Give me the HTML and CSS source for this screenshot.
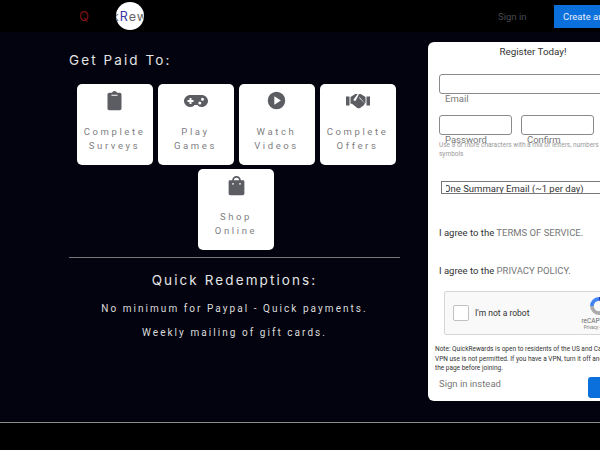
FILE: index.html
```html
<!DOCTYPE html>
<html lang="en">
<head>
    <meta charset="UTF-8">
    <meta name="viewport" content="width=device-width, initial-scale=1.0">
    <title>QuickRewards</title>
    <link rel="stylesheet" href="styles.css">
</head>
<body>
    <header class="topbar">
        <div class="logo">
            <span class="logo-q">Q</span>
            <span class="logo-circle"><span class="logo-text">k<span class="logo-r">R</span>ew</span></span>
        </div>
        <a class="signin-link">Sign in</a>
        <a class="create-btn">Create an account</a>
    </header>

    <main class="main">
        <section class="pitch">
            <h2 class="pitch-title">Get Paid To:</h2>
            <div class="tiles">
                <div class="tile">
                    <svg class="tile-icon" viewBox="0 0 24 24"><path fill-rule="evenodd" d="M12 1c1.4 0 2.4.8 2.8 2H18c1 0 2 .9 2 2v16c0 1.1-1 2-2 2H6c-1 0-2-.9-2-2V5c0-1.100 1-2 2-2h3.200C9.600 1.800 10.600 1 12 1zM8.500 5.500v1h7v-1z"/></svg>
                    <span class="tile-label">Complete<br>Surveys</span>
                </div>
                <div class="tile">
                    <svg class="tile-icon tile-icon-wide" viewBox="0 0 24 24"><path fill-rule="evenodd" d="M6.500 6h11C21 6 24 8.700 24 12s-3 6-6.500 6c-2 0-3.300-1-4-2h-3c-.7 1-2 2-4 2C3 18 0 15.300 0 12s3-6 6.500-6zM5.500 9v2h-2v2h2v2h2v-2h2v-2h-2V9zM18.500 8.800a1.500 1.500 0 100 3 1.500 1.500 0 000-3zM15.800 12.500a1.500 1.500 0 100 3 1.500 1.500 0 000-3z"/></svg>
                    <span class="tile-label">Play<br>Games</span>
                </div>
                <div class="tile">
                    <svg class="tile-icon" viewBox="0 0 24 24"><path fill-rule="evenodd" d="M12 2a10 10 0 110 20 10 10 0 010-20zM9.500 7.200v9.600l7.500-4.800z"/></svg>
                    <span class="tile-label">Watch<br>Videos</span>
                </div>
                <div class="tile">
                    <svg class="tile-icon tile-icon-wide" viewBox="0 0 24 24"><path d="M0 7.500h3.500v9H0zM20.500 7.500H24v9h-3.500zM4.500 8l4.800-3h2.400L7.600 10.500c-.4.700 1.200 2 2.200 1l2.700-3.200 6.400 6.300-1 1.400-.9.900-1 .7-1.500 1.200c-1 .7-2.200.7-3.200.1L6 14.700H4.500zM13 5h1.700l4.800 3v6l-.6.300-5.300-6-2 2.300-1.600.3z"/></svg>
                    <span class="tile-label">Complete<br>Offers</span>
                </div>
                <div class="tile">
                    <svg class="tile-icon" viewBox="0 0 24 24"><path fill-rule="evenodd" d="M12 1c2.800 0 4.800 2.100 5 5h2.500c.9 0 1.500.7 1.500 1.500V21c0 1.100-.9 2-2 2H5c-1.100 0-2-.9-2-2V7.500C3 6.700 3.600 6 4.500 6H7c.2-2.900 2.200-5 5-5zm0 2c-1.700 0-2.900 1.300-3 3h6c-.1-1.700-1.300-3-3-3zM8 9a1 1 0 100 2 1 1 0 000-2zm8 0a1 1 0 100 2 1 1 0 000-2z"/></svg>
                    <span class="tile-label">Shop<br>Online</span>
                </div>
            </div>
            <hr class="divider">
            <h3 class="redeem-title">Quick Redemptions:</h3>
            <p class="redeem-line">No minimum for Paypal - Quick payments.</p>
            <p class="redeem-line">Weekly mailing of gift cards.</p>
        </section>

        <section class="register">
            <h4 class="register-title">Register Today!</h4>
            <div class="field field-email">
                <input class="input" type="text">
                <label class="field-label">Email</label>
            </div>
            <div class="pass-row">
                <div class="field">
                    <input class="input input-small" type="password">
                    <label class="field-label">Password</label>
                </div>
                <div class="field">
                    <input class="input input-small" type="password">
                    <label class="field-label">Confirm</label>
                </div>
            </div>
            <p class="hint">Use 8 or more characters with a mix of letters, numbers &amp; symbols</p>
            <select class="mail-select">
                <option>One Summary Email (~1 per day)</option>
            </select>
            <p class="agree">I agree to the <a>TERMS OF SERVICE</a>.</p>
            <p class="agree agree-second">I agree to the <a>PRIVACY POLICY</a>.</p>
            <div class="captcha">
                <span class="captcha-box"></span>
                <span class="captcha-text">I'm not a robot</span>
                <div class="captcha-brand">
                    <svg class="captcha-logo" viewBox="0 0 24 24" fill="none" stroke-width="4.500">
                        <path stroke="#1c3aa9" d="M12 3.500a8.500 8.500 0 016.500 3"/>
                        <path stroke="#4285f4" d="M3.500 12A8.500 8.500 0 0112 3.500"/>
                        <path stroke="#ababab" d="M20.500 12a8.500 8.500 0 01-17 0"/>
                    </svg>
                    <span class="captcha-name">reCAPTCHA</span>
                    <span class="captcha-links">Privacy - Terms</span>
                </div>
            </div>
            <p class="note">Note: QuickRewards is open to residents of the US and Canada.<br>VPN use is not permitted. If you have a VPN, turn it off and refresh<br>the page before joining.</p>
            <div class="form-foot">
                <a class="signin-instead">Sign in instead</a>
                <a class="next-btn">Next</a>
            </div>
        </section>
    </main>

    <footer class="footer"></footer>
</body>
</html>
```

FILE: styles.css
```css
* {
    box-sizing: border-box;
    margin: 0;
    padding: 0;
}

html, body {
    height: 450px;
    overflow: hidden;
}

body {
    font-family: "Roboto", sans-serif;
    background: #000;
    display: flex;
    flex-direction: column;
}

.topbar {
    height: 32px;
    background: #000;
    display: flex;
    align-items: center;
    flex-shrink: 0;
    white-space: nowrap;
}

.logo {
    display: flex;
    align-items: center;
    flex-shrink: 0;
    margin-left: 79px;
    width: 419px;
}

.logo-q {
    width: 37px;
    color: #7d1216;
    font-family: "Inter", sans-serif;
    font-size: 13px;
}

.logo-circle {
    width: 28px;
    height: 28px;
    border-radius: 50%;
    background: #fff;
    overflow: hidden;
    display: flex;
    align-items: center;
    justify-content: center;
    flex-shrink: 0;
}

.logo-text {
    font-family: "Inter", sans-serif;
    font-size: 12.5px;
    letter-spacing: 1px;
    color: #666;
}

.logo-r {
    color: #3535a5;
}

.signin-link {
    color: #484b50;
    font-size: 9.5px;
    width: 56px;
    flex-shrink: 0;
}

.create-btn {
    background: #0b6fdc;
    color: #e6eefa;
    font-size: 9.5px;
    height: 23px;
    line-height: 23px;
    padding: 0 9px;
    flex-shrink: 0;
}

.main {
    height: 390px;
    background: #02030f;
    display: flex;
    align-items: flex-start;
    flex-shrink: 0;
    padding: 10px 0 0 69px;
    gap: 28px;
}

.pitch {
    width: 331px;
    flex-shrink: 0;
    padding-top: 9px;
}

.pitch-title {
    font-family: "Inter", sans-serif;
    font-weight: 400;
    font-size: 13.5px;
    letter-spacing: 2.1px;
    color: #e4e4e4;
    line-height: 18px;
}

.tiles {
    display: flex;
    flex-wrap: wrap;
    justify-content: center;
    gap: 4px 5px;
    margin-top: 15px;
    padding-left: 3px;
}

.tile {
    width: 76px;
    height: 81px;
    background: #fff;
    border-radius: 5px;
    display: flex;
    flex-direction: column;
    align-items: center;
    padding-top: 6px;
}

.tile-icon {
    width: 21px;
    height: 21px;
    fill: #5c5d63;
}

.tile-icon-wide {
    width: 24px;
    height: 24px;
    margin: -1.5px 0;
}

.tile-label {
    margin-top: 14px;
    font-size: 9.5px;
    line-height: 14px;
    letter-spacing: 2.6px;
    color: #808084;
    text-align: center;
}

.divider {
    border: none;
    border-top: 1px solid #77787c;
    margin-top: 7px;
}

.redeem-title {
    font-family: "Inter", sans-serif;
    font-weight: 400;
    font-size: 13.5px;
    letter-spacing: 2.1px;
    color: #e4e4e4;
    text-align: center;
    line-height: 18px;
    margin-top: 13px;
}

.redeem-line {
    color: #dcdcdc;
    font-size: 10px;
    letter-spacing: 2.05px;
    line-height: 14px;
    text-align: center;
    margin-top: 10px;
}

.redeem-title + .redeem-line {
    margin-top: 13px;
}

.register {
    width: 320px;
    height: 359px;
    flex-shrink: 0;
    background: #fff;
    border-radius: 6px;
    padding: 4px 0 0 11px;
}

.register-title {
    width: 188px;
    font-weight: 400;
    font-size: 9.8px;
    line-height: 12px;
    color: #333;
    text-align: center;
}

.field-email {
    margin-top: 16px;
}

.input {
    display: block;
    width: 300px;
    height: 20px;
    border: 1px solid #8a8a8a;
    border-radius: 3px;
    background: #fff;
}

.input-small {
    width: 73px;
}

.field-label {
    display: block;
    font-size: 9.5px;
    line-height: 10px;
    margin-left: 6px;
    color: #777;
}

.pass-row {
    display: flex;
    gap: 9px;
    margin-top: 11px;
}

.hint {
    width: 175px;
    font-size: 6.5px;
    line-height: 9.5px;
    color: #999;
    margin-top: -4.5px;
}

.mail-select {
    display: block;
    width: 260px;
    height: 13px;
    margin: 21px 0 0 2px;
    border: 1px solid #777;
    background: #fff;
    font-family: "Roboto", sans-serif;
    font-size: 9.5px;
    line-height: 11px;
    color: #333;
    padding: 0;
    text-indent: -2px;
}

.agree {
    font-size: 9.5px;
    line-height: 12px;
    color: #333;
    margin-top: 33.5px;
}

.agree-second {
    margin-top: 26px;
}

.agree a {
    color: #777;
}

.captcha {
    width: 304px;
    height: 44px;
    margin: 14px 0 0 5px;
    background: #f9f9f9;
    border: 1px solid #d6d6d6;
    border-radius: 2px;
    display: flex;
    align-items: center;
    padding-left: 8px;
}

.captcha-box {
    width: 16px;
    height: 16px;
    background: #fff;
    border: 1px solid #c1c1c1;
    border-radius: 2px;
    flex-shrink: 0;
}

.captcha-text {
    font-size: 8.5px;
    color: #333;
    margin-left: 6px;
    width: 103px;
    flex-shrink: 0;
}

.captcha-brand {
    display: flex;
    flex-direction: column;
    align-items: center;
    width: 42px;
}

.captcha-logo {
    width: 20px;
    height: 20px;
}

.captcha-name {
    font-size: 6.5px;
    line-height: 8px;
    color: #666;
    margin-top: 1px;
}

.captcha-links {
    font-size: 4.5px;
    line-height: 6px;
    color: #777;
}

.note {
    font-size: 6.5px;
    line-height: 9.5px;
    color: #333;
    margin: 10px 0 0 -4px;
    white-space: nowrap;
}

.form-foot {
    display: flex;
    align-items: center;
    margin-top: 3.5px;
}

.signin-instead {
    font-size: 9.5px;
    color: #777;
    width: 149px;
    margin-bottom: 9px;
}

.next-btn {
    width: 44px;
    height: 21px;
    line-height: 21px;
    border-radius: 3px;
    background: #0b6fdc;
    color: #fff;
    font-size: 9.5px;
    text-align: center;
    padding-left: 8px;
}

.footer {
    flex: 1;
    background: #000;
    border-top: 1px solid #8d8d8d;
}
```
